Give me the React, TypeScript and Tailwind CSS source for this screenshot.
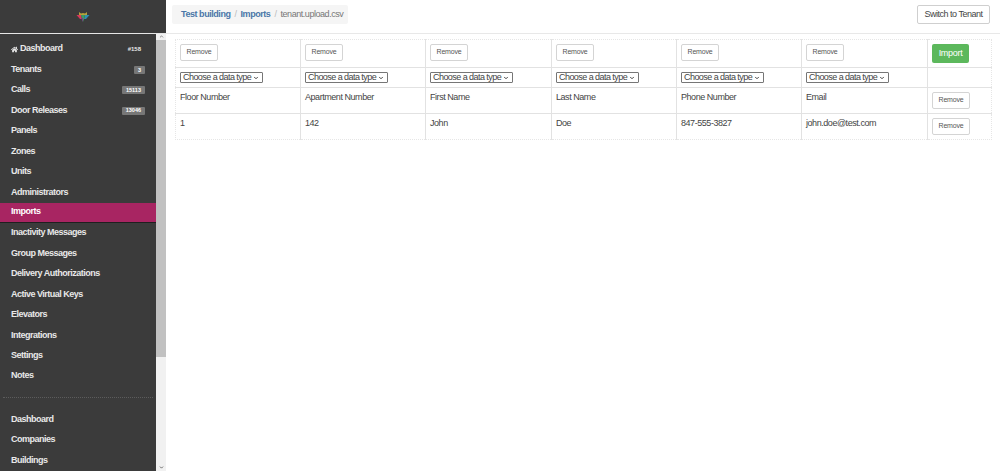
import { ChevronDown, ChevronUp } from "lucide-react";
import { FaHome } from "react-icons/fa";

const navTop = [
  { label: "Dashboard", badge: "#158", home: true },
  { label: "Tenants", badge: "3" },
  { label: "Calls", badge: "15113" },
  { label: "Door Releases", badge: "13046" },
  { label: "Panels" },
  { label: "Zones" },
  { label: "Units" },
  { label: "Administrators" },
  { label: "Imports", active: true },
  { label: "Inactivity Messages" },
  { label: "Group Messages" },
  { label: "Delivery Authorizations" },
  { label: "Active Virtual Keys" },
  { label: "Elevators" },
  { label: "Integrations" },
  { label: "Settings" },
  { label: "Notes" },
];

const navBottom = ["Dashboard", "Companies", "Buildings"];

const columns = [
  { head: "Floor Number", value: "1" },
  { head: "Apartment Number", value: "142" },
  { head: "First Name", value: "John" },
  { head: "Last Name", value: "Doe" },
  { head: "Phone Number", value: "847-555-3827" },
  { head: "Email", value: "john.doe@test.com" },
];

const widths = ["w-[125px]", "w-[125px]", "w-[126px]", "w-[125px]", "w-[125px]", "w-[126px]"];

function RemoveButton() {
  return (
    <button className="block h-[17px] w-[38px] rounded-[2px] border border-[#d4d4d4] bg-white text-[7px] tracking-[-0.2px] text-[#555]">
      Remove
    </button>
  );
}

function TypeSelect() {
  return (
    <div className="flex h-[11px] w-[83px] items-center justify-between rounded-[1px] border border-[#767676] bg-white pl-[2px] pr-[3px] text-[9px] leading-none tracking-[-0.55px] whitespace-nowrap text-[#444]">
      <span>Choose a data type</span>
      <ChevronDown className="h-[6px] w-[6px] shrink-0" strokeWidth={4} />
    </div>
  );
}

function Logo() {
  return (
    <svg width="14" height="12" viewBox="0 0 14 12">
      <path d="M3 1 L5 2.5 L7 2 L9 2.5 L11 1 L11 4 L3 4 Z" fill="#b5a13a" />
      <path d="M0.5 4 L5 4 L6 8 L4 8 Z" fill="#d8395a" />
      <path d="M9 4 L13.5 4 L10 8 L8 8 Z" fill="#2f8fb0" />
      <path d="M5 4 L9 4 L8 8 L7 11 L6 8 Z" fill="#3f9a63" />
      <path d="M5 7 L7 7 L7 11 Z" fill="#7a3a86" />
    </svg>
  );
}

function Sidebar() {
  return (
    <aside className="flex h-[471px] w-[166px] shrink-0 flex-col bg-[#3b3b3b] text-[9px] font-bold tracking-[-0.5px] text-[#e8e8e8]">
      <div className="flex h-[33px] shrink-0 items-center justify-center">
        <Logo />
      </div>
      <div className="h-px shrink-0 bg-[#e6e6e6]" />
      <div className="flex min-h-0 flex-1">
        <nav className="flex w-[156px] flex-col pt-[5px]">
          {navTop.map((item) => (
            <div
              key={item.label}
              className={`flex h-[20.45px] shrink-0 items-center justify-between pl-[11px] pr-[11px] ${
                item.active ? "border-b border-[#1f1f1f] bg-[#a82562] text-white" : ""
              }`}
            >
              <span className="flex items-center gap-[2px]">
                {item.home && <FaHome className="h-[7px] w-[7px]" />}
                {item.label}
              </span>
              {item.badge &&
                (item.home ? (
                  <span className="pr-[4px] text-[6px] tracking-normal">{item.badge}</span>
                ) : (
                  <span className="flex h-[8px] items-center rounded-[1px] bg-[#777] px-[4px] text-[5.5px] tracking-normal text-white">
                    {item.badge}
                  </span>
                ))}
            </div>
          ))}
          <div className="mx-[3px] mt-[11px] mb-[11px] border-t border-dotted border-[#5c5c5c]" />
          {navBottom.map((label) => (
            <div key={label} className="flex h-[20.45px] shrink-0 items-center pl-[11px]">
              {label}
            </div>
          ))}
        </nav>
        <div className="flex w-[10px] flex-col bg-[#f1f1f1]">
          <div className="flex h-[5px] items-center justify-center">
            <ChevronUp className="h-[5px] w-[5px] text-[#777]" strokeWidth={4} />
          </div>
          <div className="mt-[1px] h-[317px] bg-[#c1c1c1]" />
          <div className="flex-1" />
          <div className="flex h-[8px] items-center justify-center">
            <ChevronDown className="h-[5px] w-[5px] text-[#555]" strokeWidth={4} />
          </div>
        </div>
      </div>
    </aside>
  );
}

function Topbar() {
  return (
    <header className="flex h-[34px] shrink-0 items-start justify-between border-b border-solid border-[#e8e8e8] pl-[6px] pr-[10px] pt-[5px]">
      <div className="flex h-[19px] w-[176px] items-center rounded-[2px] bg-[#f5f5f5] pl-[9px] text-[9px] tracking-[-0.45px] text-[#777]">
        <span className="font-bold text-[#4a77a8]">Test building</span>
        <span className="mx-[4px] text-[#bbb]">/</span>
        <span className="font-bold text-[#4a77a8]">Imports</span>
        <span className="mx-[4px] text-[#bbb]">/</span>
        <span>tenant.upload.csv</span>
      </div>
      <button className="h-[19px] w-[73px] rounded-[2px] border border-[#cfcfcf] bg-white text-[9px] tracking-[-0.5px] text-[#444]">
        Switch to Tenant
      </button>
    </header>
  );
}

function ImportTable() {
  const cell = "border-r border-[#e2e2e2] px-[4px] align-top";
  return (
    <table className="ml-[9px] mt-[5px] w-[817px] table-fixed border-collapse border border-dotted border-[#e6e6e6] text-[9px] tracking-[-0.45px] text-[#444]">
      <tbody>
        <tr className="h-[28px] border-b border-[#e2e2e2]">
          {columns.map((c, i) => (
            <td key={c.head} className={`${widths[i]} ${cell} pt-[4px]`}>
              <RemoveButton />
            </td>
          ))}
          <td className="px-[4px] pt-[4px] align-top">
            <button className="block h-[19px] w-[37px] rounded-[2px] bg-[#5cb85c] text-[9px] tracking-[-0.3px] text-white">
              Import
            </button>
          </td>
        </tr>
        <tr className="h-[20px] border-b border-[#e2e2e2]">
          {columns.map((c) => (
            <td key={c.head} className={`${cell} pt-[4px]`}>
              <TypeSelect />
            </td>
          ))}
          <td />
        </tr>
        <tr className="h-[26px] border-b border-[#e2e2e2]">
          {columns.map((c) => (
            <td key={c.head} className={`${cell} pt-[4px] leading-[11px]`}>
              {c.head}
            </td>
          ))}
          <td className="pl-[4px] pt-[4px] align-top">
            <RemoveButton />
          </td>
        </tr>
        <tr className="h-[26px]">
          {columns.map((c) => (
            <td key={c.head} className={`${cell} pt-[4px] leading-[11px]`}>
              {c.value}
            </td>
          ))}
          <td className="pl-[4px] pt-[4px] align-top">
            <RemoveButton />
          </td>
        </tr>
      </tbody>
    </table>
  );
}

export default function App() {
  return (
    <div className="flex h-[471px] w-[1000px] overflow-hidden bg-white font-['Liberation_Sans',Arial,sans-serif]">
      <Sidebar />
      <main className="flex min-w-0 flex-1 flex-col">
        <Topbar />
        <ImportTable />
      </main>
    </div>
  );
}
